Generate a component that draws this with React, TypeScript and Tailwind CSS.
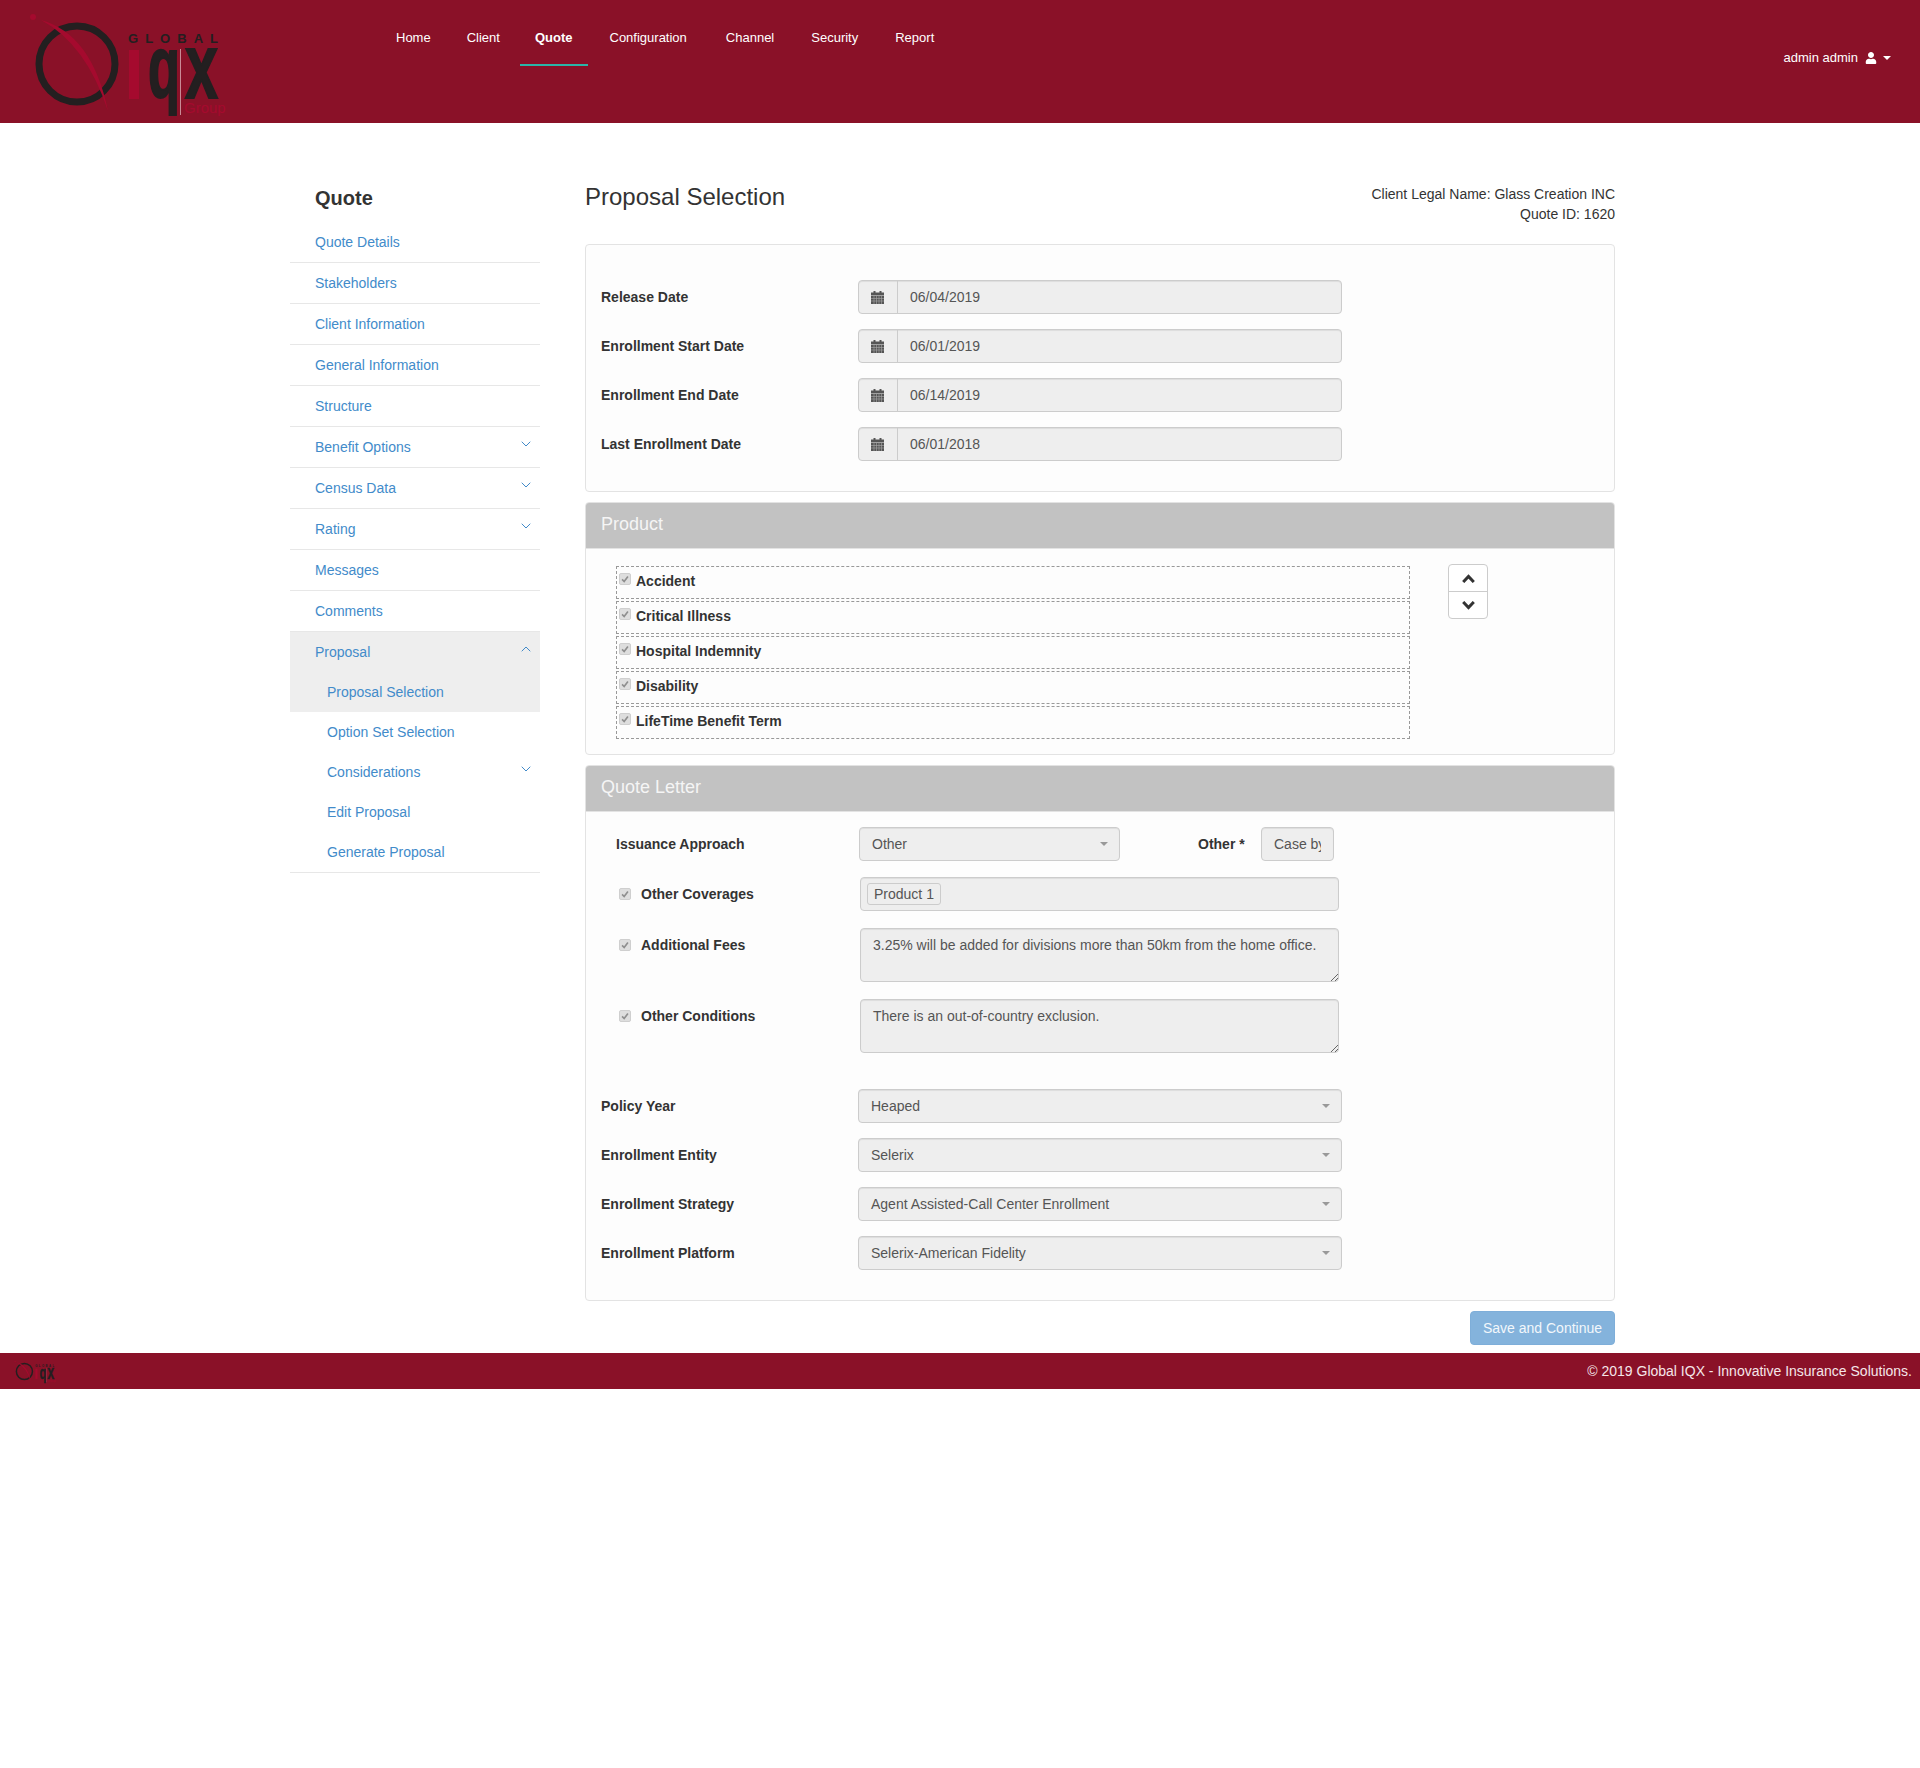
import { FaUser } from "react-icons/fa";
import { ChevronDown, ChevronUp } from "lucide-react";

const navItems = [
  { label: "Home", cls: "ml-[2px] border-transparent" },
  { label: "Client", cls: "ml-[6px] border-transparent" },
  { label: "Quote", cls: "ml-[5px] font-bold border-[#2bb5a8]" },
  { label: "Configuration", cls: "ml-[7px] border-transparent" },
  { label: "Channel", cls: "ml-[9px] border-transparent" },
  { label: "Security", cls: "ml-[7px] border-transparent" },
  { label: "Report", cls: "ml-[7px] border-transparent" },
];

const sideItems = [
  { label: "Quote Details" },
  { label: "Stakeholders" },
  { label: "Client Information" },
  { label: "General Information" },
  { label: "Structure" },
  { label: "Benefit Options", chevron: true },
  { label: "Census Data", chevron: true },
  { label: "Rating", chevron: true },
  { label: "Messages" },
  { label: "Comments" },
];

const subItems = [
  { label: "Option Set Selection" },
  { label: "Considerations", chevron: true },
  { label: "Edit Proposal" },
  { label: "Generate Proposal" },
];

const dates = [
  { label: "Release Date", value: "06/04/2019" },
  { label: "Enrollment Start Date", value: "06/01/2019" },
  { label: "Enrollment End Date", value: "06/14/2019" },
  { label: "Last Enrollment Date", value: "06/01/2018" },
];

const products = ["Accident", "Critical Illness", "Hospital Indemnity", "Disability", "LifeTime Benefit Term"];

const selects = [
  { label: "Policy Year", value: "Heaped" },
  { label: "Enrollment Entity", value: "Selerix" },
  { label: "Enrollment Strategy", value: "Agent Assisted-Call Center Enrollment" },
  { label: "Enrollment Platform", value: "Selerix-American Fidelity" },
];

const field = "rounded-[4px] border border-[#ccc] bg-[#eee] text-[#555] shadow-[inset_0_1px_1px_rgba(0,0,0,0.075)]";

function Logo({ className }: { className: string }) {
  return (
    <svg viewBox="0 0 240 123" className={className}>
      <circle cx="77" cy="64" r="38" fill="none" stroke="#231f20" strokeWidth="7" />
      <circle cx="33" cy="17" r="3" fill="#a50a2e" />
      <path d="M41 20 Q92 34 108 111 Q86 44 41 20Z" fill="#a50a2e" />
      <text x="128" y="43" fontFamily="Liberation Sans, sans-serif" fontWeight="700" fontSize="13" fill="#231f20" textLength="90">
        GLOBAL
      </text>
      <rect x="129" y="50" width="10" height="49" fill="#a50a2e" />
      <text x="148" y="97" fontFamily="Liberation Sans, sans-serif" fontWeight="700" fontSize="88" fill="#231f20" stroke="#231f20" strokeWidth="2" textLength="32" lengthAdjust="spacingAndGlyphs">
        q
      </text>
      <rect x="180" y="49" width="1" height="66" fill="#c98a96" />
      <text x="185" y="98" fontFamily="Liberation Sans, sans-serif" fontWeight="700" fontSize="92" fill="#231f20" stroke="#231f20" strokeWidth="2" textLength="33" lengthAdjust="spacingAndGlyphs">
        x
      </text>
      <text x="184" y="113" fontFamily="Liberation Sans, sans-serif" fontSize="15" fill="#a50a2e">
        Group
      </text>
    </svg>
  );
}

function Caret() {
  return <span className="h-0 w-0 border-x-[4px] border-t-[4px] border-x-transparent border-t-[#999]" />;
}

function Check() {
  return (
    <span className="flex h-[12px] w-[12px] shrink-0 items-center justify-center rounded-[2px] border border-[#cfcfcf] bg-[#dedede]">
      <svg viewBox="0 0 12 12" className="h-[10px] w-[10px]">
        <path d="M2.5 6.5 L5 9 L9.5 3" fill="none" stroke="#8f8f8f" strokeWidth="2" />
      </svg>
    </span>
  );
}

function Grip() {
  return (
    <svg viewBox="0 0 8 8" className="absolute bottom-0 right-0 h-[8px] w-[8px]">
      <path d="M1 8 L8 1 M5 8 L8 5" stroke="#666" strokeWidth="1" />
    </svg>
  );
}

function CalendarIcon() {
  return (
    <svg viewBox="0 0 13 13" className="h-[13px] w-[13px]">
      <rect x="2.5" y="0" width="2" height="2" fill="#555" />
      <rect x="8.5" y="0" width="2" height="2" fill="#555" />
      <rect x="0" y="1.5" width="13" height="3" fill="#555" />
      <rect x="0" y="5" width="13" height="8" fill="#555" />
      <path d="M3 5V13M5.5 5V13M8 5V13M10.5 5V13M0 7.5H13M0 10H13" stroke="#aaa" strokeWidth="0.6" />
    </svg>
  );
}

function MoveChevron({ up }: { up?: boolean }) {
  return (
    <svg viewBox="0 0 13 9" className="h-[9px] w-[13px]">
      <path d={up ? "M1.2 8 L6.5 2.5 L11.8 8" : "M1.2 1 L6.5 6.5 L11.8 1"} fill="none" stroke="#333" strokeWidth="3" />
    </svg>
  );
}

function SideRow({ label, chevron, sub }: { label: string; chevron?: boolean; sub?: boolean }) {
  return (
    <div className={sub ? "flex h-[40px] items-center pl-[37px] pr-[6px]" : "flex h-[41px] items-center border-b border-[#e7e7e7] pl-[25px] pr-[6px]"}>
      <span>{label}</span>
      {chevron && <ChevronDown size={16} strokeWidth={1.5} className="ml-auto mb-[6px]" />}
    </div>
  );
}

function PanelHead({ title }: { title: string }) {
  return <div className="h-[46px] border-b border-[#e3e3e3] bg-[#c2c2c2] pl-[15px] pt-[8px] text-[18px] leading-[26px] text-[#f5f5f5]">{title}</div>;
}

function LabeledField({ label, children }: { label: string; children: React.ReactNode }) {
  return (
    <div className="mb-[15px] flex h-[34px] items-center last:mb-0">
      <div className="w-[257px] font-bold text-[#333]">{label}</div>
      {children}
    </div>
  );
}

export default function App() {
  return (
    <div className="bg-white font-['Liberation_Sans',Arial,sans-serif] text-[14px] leading-[20px] text-[#333]">
      <header className="flex h-[123px] bg-[#8a1128] text-[13px] text-white">
        <div className="w-[379px] shrink-0">
          <Logo className="h-[123px] w-[240px]" />
        </div>
        <nav className="flex self-start">
          {navItems.map((n) => (
            <a key={n.label} className={`block border-b-2 px-[15px] pb-[16px] pt-[28px] ${n.cls}`}>
              {n.label}
            </a>
          ))}
        </nav>
        <div className="ml-auto flex items-center gap-[7px] self-start pr-[29px] pt-[48px]">
          <span>admin admin</span>
          <FaUser className="h-[12px] w-[12px]" />
          <span className="-ml-px h-0 w-0 border-x-[4px] border-t-[4px] border-x-transparent border-t-white" />
        </div>
      </header>

      <div className="flex pl-[290px] pr-[305px]">
        <aside className="w-[250px] shrink-0 pt-[64px] text-[#428bca]">
          <h3 className="h-[35px] pl-[25px] text-[20px] font-bold leading-[22px] text-[#333]">Quote</h3>
          {sideItems.map((s) => (
            <SideRow key={s.label} label={s.label} chevron={s.chevron} />
          ))}
          <div className="bg-[#eee]">
            <div className="flex h-[40px] items-center pl-[25px] pr-[6px]">
              <span>Proposal</span>
              <ChevronUp size={16} strokeWidth={1.5} className="ml-auto mb-[6px]" />
            </div>
            <SideRow label="Proposal Selection" sub />
          </div>
          <div className="border-b border-[#e7e7e7]">
            {subItems.map((s) => (
              <SideRow key={s.label} label={s.label} chevron={s.chevron} sub />
            ))}
          </div>
        </aside>

        <main className="ml-[45px] min-w-0 flex-1 pt-[61px]">
          <div className="mb-[20px] flex h-[40px] items-start justify-between">
            <h1 className="text-[24px] leading-[26px] text-[#333]">Proposal Selection</h1>
            <div className="text-right">
              <div>Client Legal Name: Glass Creation INC</div>
              <div>Quote ID: 1620</div>
            </div>
          </div>

          <section className="rounded-[4px] border border-[#e3e3e3] bg-[#fdfdfd] pb-[30px] pl-[15px] pt-[35px]">
            {dates.map((d) => (
              <LabeledField key={d.label} label={d.label}>
                <div className={`flex h-[34px] w-[484px] items-stretch ${field}`}>
                  <span className="flex w-[39px] items-center justify-center border-r border-[#ccc] pr-[1px]">
                    <CalendarIcon />
                  </span>
                  <span className="flex items-center pl-[12px]">{d.value}</span>
                </div>
              </LabeledField>
            ))}
          </section>

          <section className="mt-[10px] overflow-hidden rounded-[4px] border border-[#e3e3e3] bg-[#fdfdfd]">
            <PanelHead title="Product" />
            <div className="flex pb-[15px] pl-[30px] pt-[17px]">
              <div className="w-[794px]">
                {products.map((p) => (
                  <div key={p} className="mb-[2px] flex h-[33px] gap-[5px] border border-dashed border-[#999] pl-[2px] pt-[4px] font-bold last:mb-0">
                    <span className="pt-[2px]">
                      <Check />
                    </span>
                    <span>{p}</span>
                  </div>
                ))}
              </div>
              <div className="ml-[38px] h-[55px] w-[40px] -translate-y-[2px] rounded-[4px] border border-[#ccc] bg-white">
                <div className="flex h-[27px] items-center justify-center border-b border-[#ccc] pt-[1px]">
                  <MoveChevron up />
                </div>
                <div className="flex h-[26px] items-center justify-center pt-[1px]">
                  <MoveChevron />
                </div>
              </div>
            </div>
          </section>

          <section className="mt-[10px] overflow-hidden rounded-[4px] border border-[#e3e3e3] bg-[#fdfdfd]">
            <PanelHead title="Quote Letter" />
            <div className="pl-[30px] pt-[15px]">
              <div className="flex h-[34px] items-center">
                <div className="w-[243px] font-bold">Issuance Approach</div>
                <div className={`flex h-[34px] w-[261px] items-center justify-between pl-[12px] pr-[11px] ${field}`}>
                  <span>Other</span>
                  <Caret />
                </div>
                <div className="ml-[78px] w-[63px] font-bold">Other *</div>
                <div className={`h-[34px] w-[73px] px-[12px] py-[6px] ${field}`}>
                  <div className="overflow-hidden whitespace-nowrap">Case by case</div>
                </div>
              </div>

              <div className="mt-[16px] flex h-[34px] items-center">
                <span className="ml-[3px]">
                  <Check />
                </span>
                <div className="ml-[10px] w-[219px] font-bold">Other Coverages</div>
                <div className={`flex h-[34px] w-[479px] items-center pl-[6px] ${field}`}>
                  <span className="rounded-[3px] border border-[#ccc] bg-[#eee] px-[6px] leading-[20px]">Product 1</span>
                </div>
              </div>

              {[
                { label: "Additional Fees", text: "3.25% will be added for divisions more than 50km from the home office." },
                { label: "Other Conditions", text: "There is an out-of-country exclusion." },
              ].map((r) => (
                <div key={r.label} className="mt-[17px] flex">
                  <span className="ml-[3px] pt-[11px]">
                    <Check />
                  </span>
                  <div className="ml-[10px] w-[219px] pt-[7px] font-bold">{r.label}</div>
                  <div className={`relative h-[54px] w-[479px] px-[12px] py-[6px] ${field}`}>
                    {r.text}
                    <Grip />
                  </div>
                </div>
              ))}
            </div>

            <div className="pb-[30px] pl-[15px] pt-[36px]">
              {selects.map((s) => (
                <LabeledField key={s.label} label={s.label}>
                  <div className={`flex h-[34px] w-[484px] items-center justify-between pl-[12px] pr-[11px] ${field}`}>
                    <span>{s.value}</span>
                    <Caret />
                  </div>
                </LabeledField>
              ))}
            </div>
          </section>

          <div className="mt-[10px] flex justify-end">
            <button className="h-[34px] w-[145px] rounded-[4px] border border-[#7eaed9] bg-[#84b3dc] text-[#f2f7fb]">Save and Continue</button>
          </div>
        </main>
      </div>

      <footer className="mt-[8px] flex h-[36px] items-center justify-between bg-[#8a1128] pl-[8px] pr-[8px] text-[#f5e6e9]">
        <Logo className="h-[26px] w-[51px]" />
        <span>© 2019 Global IQX - Innovative Insurance Solutions.</span>
      </footer>
    </div>
  );
}
